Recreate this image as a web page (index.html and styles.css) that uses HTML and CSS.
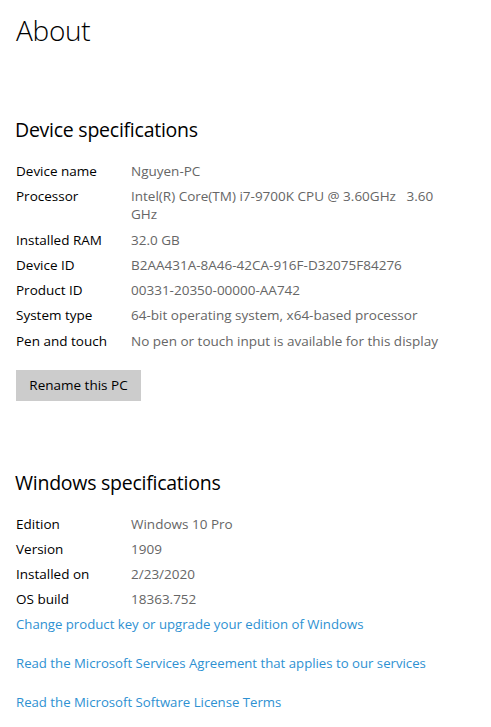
FILE: index.html
```html
<!DOCTYPE html>
<html lang="en">
<head>
<meta charset="utf-8">
<title>About</title>
<link rel="stylesheet" href="styles.css">
</head>
<body>
<main class="page">
  <h1 class="title">About</h1>

  <section class="section device">
    <h2 class="heading heading-device">Device specifications</h2>
    <dl class="specs">
      <div class="row"><dt>Device name</dt><dd>Nguyen-PC</dd></div>
      <div class="row"><dt>Processor</dt><dd>Intel(R) Core(TM) i7-9700K CPU @ 3.60GHz&nbsp;&nbsp;&nbsp;3.60 GHz</dd></div>
      <div class="row"><dt>Installed RAM</dt><dd>32.0 GB</dd></div>
      <div class="row"><dt>Device ID</dt><dd>B2AA431A-8A46-42CA-916F-D32075F84276</dd></div>
      <div class="row"><dt>Product ID</dt><dd>00331-20350-00000-AA742</dd></div>
      <div class="row"><dt>System type</dt><dd>64-bit operating system, x64-based processor</dd></div>
      <div class="row"><dt>Pen and touch</dt><dd>No pen or touch input is available for this display</dd></div>
    </dl>
    <button class="btn" type="button">Rename this PC</button>
  </section>

  <section class="section windows">
    <h2 class="heading heading-windows">Windows specifications</h2>
    <dl class="specs">
      <div class="row"><dt>Edition</dt><dd>Windows 10 Pro</dd></div>
      <div class="row"><dt>Version</dt><dd>1909</dd></div>
      <div class="row"><dt>Installed on</dt><dd>2/23/2020</dd></div>
      <div class="row"><dt>OS build</dt><dd>18363.752</dd></div>
    </dl>
    <div class="links">
      <a class="link" href="#">Change product key or upgrade your edition of Windows</a>
      <a class="link" href="#">Read the Microsoft Services Agreement that applies to our services</a>
      <a class="link" href="#">Read the Microsoft Software License Terms</a>
    </div>
  </section>
</main>
</body>
</html>
```

FILE: styles.css
```css
* { box-sizing: border-box; }

html, body {
  margin: 0;
  padding: 0;
  background: #ffffff;
}

body {
  font-family: "Open Sans", "Noto Sans", "Liberation Sans", sans-serif;
  font-size: 13.5px;
  color: #000;
  width: 491px;
  height: 727px;
  overflow: hidden;
}

.page {
  padding: 10px 16px 0 16px;
  display: flex;
  flex-direction: column;
}

.title {
  margin: 0;
  font-size: 28px;
  font-weight: 300;
  line-height: 40px;
  letter-spacing: -0.3px;
}

.section {
  display: flex;
  flex-direction: column;
  align-items: flex-start;
}

.device { margin-top: 66px; }
.windows { margin-top: 68px; }

.heading {
  margin: 0;
  font-size: 19.5px;
  font-weight: 400;
  line-height: 28px;
  letter-spacing: -0.25px;
}

.heading-device { margin-left: -1px; }
.heading-windows { margin-left: -1px; }

.specs {
  margin: 18px 0 0 0;
  display: flex;
  flex-direction: column;
  gap: 7px;
}

.row {
  display: flex;
  line-height: 18px;
}

.device .row + .row { margin-top: 0.3px; }

.row dt {
  width: 115px;
  flex: none;
}

.row dd {
  margin: 0;
  width: 312px;
  color: #666666;
}

.btn {
  margin-top: 20px;
  height: 31px;
  width: 125px;
  border: 0;
  background: #cccccc;
  color: #000;
  font-family: inherit;
  font-size: 13.5px;
  padding: 0;
}

.links {
  margin-top: 7px;
  display: flex;
  flex-direction: column;
  gap: 21px;
}

.link {
  line-height: 18px;
  font-size: 13.2px;
  color: #2e91d2;
  text-decoration: none;
}
```
